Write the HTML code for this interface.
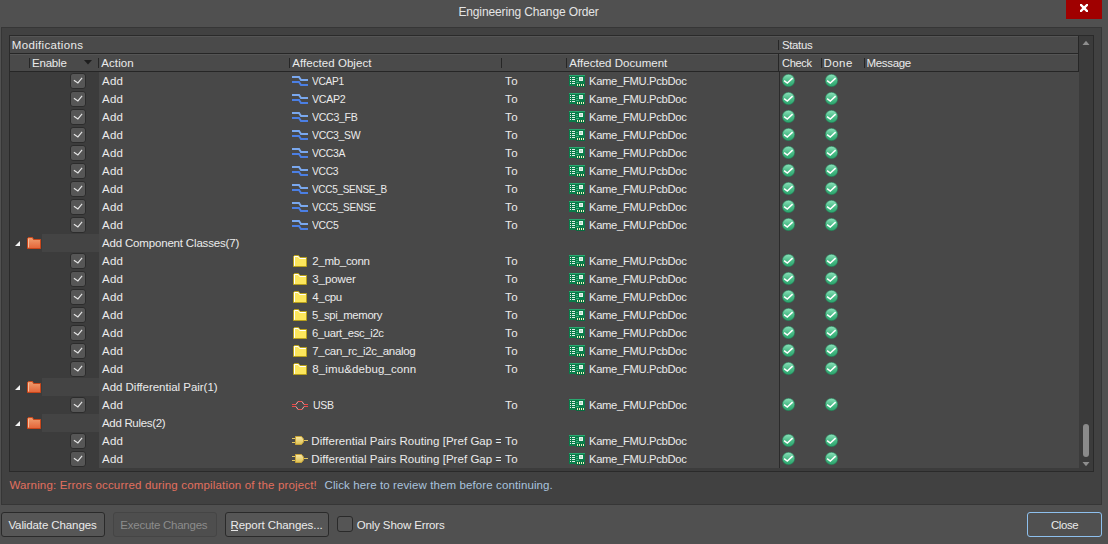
<!DOCTYPE html><html><head><meta charset='utf-8'><style>
*{margin:0;padding:0;box-sizing:border-box}
html,body{width:1108px;height:544px;overflow:hidden;background:#505050;font-family:"Liberation Sans",sans-serif;font-size:11.5px}
.a{position:absolute}
.t{position:absolute;line-height:20px;white-space:pre}
.ic{position:absolute;display:block}
.cb{position:absolute;width:16px;height:16px;border:1px solid #2c2c2c;border-radius:3px;background:#565656}
.grp{position:absolute;left:42px;width:57px;height:18px;background:#444444}
.sep{position:absolute;width:1px;height:10px;background:#262626}
.btn{position:absolute;top:512px;height:25px;border:1px solid #2a2a2a;border-radius:3px;background:#565656}
</style></head><body><div class=a style='left:1066px;top:0;width:36px;height:19px;background:#a00000'></div>
<svg class=ic style='left:1080px;top:4px' width=8 height=8 viewBox='0 0 8 8'><path d='M0.9 0.9L7.1 7.1M7.1 0.9L0.9 7.1' stroke='#fff' stroke-width='2.3' stroke-linecap='square'/><rect x='2.5' y='2.5' width='3' height='3' fill='#fff'/></svg>
<div class=a style='left:1px;top:27px;width:1101px;height:478px;background:#414141;border:1px solid #363636'></div>
<div class=a style='left:9px;top:35px;width:1085px;height:437px;background:#3c3c3c;border:1px solid #2a2a2a'></div>
<div class=a style='left:10px;top:36px;width:1069px;height:18px;background:#4a4a4a;border-top:1px solid #555;border-bottom:1px solid #262626'></div>
<div class=a style='left:10px;top:54px;width:1069px;height:18px;background:#4a4a4a;border-top:1px solid #555;border-bottom:1px solid #262626'></div>
<div class=a style='left:1078px;top:36px;width:1px;height:36px;background:#262626'></div>
<div class=sep style='left:778px;top:40px'></div>
<div class=sep style='left:29px;top:58px'></div>
<div class=sep style='left:98px;top:58px'></div>
<div class=sep style='left:289px;top:58px'></div>
<div class=sep style='left:501px;top:58px'></div>
<div class=sep style='left:566px;top:58px'></div>
<div class=sep style='left:821px;top:58px'></div>
<div class=sep style='left:864px;top:58px'></div>
<svg class=ic style='left:84px;top:60px' width=9 height=5 viewBox='0 0 9 5'><path d='M0 0H8L4 4.5Z' fill='#1e1e1e'/></svg>
<div class=a style='left:99px;top:72px;width:980px;height:396px;background:#484848'></div>
<div class=grp style='top:234px'></div>
<div class=grp style='top:378px'></div>
<div class=grp style='top:414px'></div>
<div class=a style='left:778px;top:54px;width:1px;height:18px;background:#262626'></div>
<div class=a style='left:779px;top:72px;width:1px;height:396px;background:#2a2a2a'></div>
<div class=a style='left:1079px;top:36px;width:14px;height:434px;background:#3b3b3b'></div>
<svg class=ic style='left:1082px;top:40px' width=8 height=5 viewBox='0 0 8 5'><path d='M0.5 5H7.5L4 0.8Z' fill='#8e8e8e'/></svg>
<svg class=ic style='left:1082px;top:462px' width=8 height=5 viewBox='0 0 8 5'><path d='M0.5 0H7.5L4 4.2Z' fill='#8e8e8e'/></svg>
<div class=a style='left:1083px;top:424px;width:6px;height:33px;border-radius:3px;background:#8a8a8a'></div>
<div class=cb style='left:70px;top:73px'><svg width=14 height=14 viewBox='0 0 14 14' style='position:absolute;left:0;top:0'><path d='M2.9 6.2L6.9 8.9L11.1 3.9' stroke='#e8e8e8' stroke-width='1.1' fill='none'/></svg></div>
<svg class=ic style='left:292px;top:76px' width=17 height=12 viewBox='0 0 17 12'><path d='M0 1H7L9 4H16' stroke='#7aa8ee' stroke-width='2' fill='none'/><path d='M0 6H7L9 9H16' stroke='#4b7fe4' stroke-width='2' fill='none'/></svg>
<svg class=ic style='left:569px;top:75px' width=16 height=12 viewBox='0 0 16 12'><rect x='0' y='0' width='16' height='11' fill='#0a7c4a'/><rect x='7' y='9' width='9' height='3' fill='#086c40'/><rect x='7' y='3' width='2' height='1' fill='#34b07a'/><rect x='7' y='5' width='2' height='1' fill='#34b07a'/><rect x='7' y='7' width='3' height='1' fill='#34b07a'/><rect x='0' y='0' width='16' height='1' fill='#2aa870'/><rect x='1' y='2' width='1' height='1' fill='#e8f4ee'/><rect x='3' y='2' width='3' height='1' fill='#e0f0e8'/><rect x='1' y='4' width='1' height='1' fill='#e8f4ee'/><rect x='3' y='4' width='3' height='1' fill='#e0f0e8'/><rect x='1' y='6' width='1' height='1' fill='#e8f4ee'/><rect x='3' y='6' width='3' height='1' fill='#e0f0e8'/><rect x='1' y='8' width='1' height='1' fill='#e8f4ee'/><rect x='3' y='8' width='3' height='1' fill='#e0f0e8'/><rect x='10' y='2' width='4' height='4' fill='#e8f4ee'/><rect x='11' y='3' width='2' height='2' fill='#b8dcc8'/><rect x='8' y='9' width='1' height='2' fill='#f4f0c0'/><rect x='10' y='9' width='1' height='2' fill='#f4f0c0'/><rect x='12' y='9' width='1' height='2' fill='#f4f0c0'/><rect x='14' y='9' width='1' height='2' fill='#f4f0c0'/></svg>
<svg class=ic style='left:782px;top:74px' width=13 height=13 viewBox='0 0 13 13'><defs><linearGradient id='gs' x1='0' y1='0' x2='0' y2='1'><stop offset='0' stop-color='#8ce2bc'/><stop offset='0.5' stop-color='#4cbc88'/><stop offset='1' stop-color='#2aa46c'/></linearGradient></defs><circle cx='6.5' cy='6.5' r='6.2' fill='url(#gs)' stroke='#207a52' stroke-width='0.5'/><path d='M2.1 6.6L5.3 9.1L10.6 4.1' stroke='#fff' stroke-width='1.5' fill='none'/></svg>
<svg class=ic style='left:825px;top:74px' width=13 height=13 viewBox='0 0 13 13'><defs><linearGradient id='gs' x1='0' y1='0' x2='0' y2='1'><stop offset='0' stop-color='#8ce2bc'/><stop offset='0.5' stop-color='#4cbc88'/><stop offset='1' stop-color='#2aa46c'/></linearGradient></defs><circle cx='6.5' cy='6.5' r='6.2' fill='url(#gs)' stroke='#207a52' stroke-width='0.5'/><path d='M2.1 6.6L5.3 9.1L10.6 4.1' stroke='#fff' stroke-width='1.5' fill='none'/></svg>
<div class=cb style='left:70px;top:91px'><svg width=14 height=14 viewBox='0 0 14 14' style='position:absolute;left:0;top:0'><path d='M2.9 6.2L6.9 8.9L11.1 3.9' stroke='#e8e8e8' stroke-width='1.1' fill='none'/></svg></div>
<svg class=ic style='left:292px;top:94px' width=17 height=12 viewBox='0 0 17 12'><path d='M0 1H7L9 4H16' stroke='#7aa8ee' stroke-width='2' fill='none'/><path d='M0 6H7L9 9H16' stroke='#4b7fe4' stroke-width='2' fill='none'/></svg>
<svg class=ic style='left:569px;top:93px' width=16 height=12 viewBox='0 0 16 12'><rect x='0' y='0' width='16' height='11' fill='#0a7c4a'/><rect x='7' y='9' width='9' height='3' fill='#086c40'/><rect x='7' y='3' width='2' height='1' fill='#34b07a'/><rect x='7' y='5' width='2' height='1' fill='#34b07a'/><rect x='7' y='7' width='3' height='1' fill='#34b07a'/><rect x='0' y='0' width='16' height='1' fill='#2aa870'/><rect x='1' y='2' width='1' height='1' fill='#e8f4ee'/><rect x='3' y='2' width='3' height='1' fill='#e0f0e8'/><rect x='1' y='4' width='1' height='1' fill='#e8f4ee'/><rect x='3' y='4' width='3' height='1' fill='#e0f0e8'/><rect x='1' y='6' width='1' height='1' fill='#e8f4ee'/><rect x='3' y='6' width='3' height='1' fill='#e0f0e8'/><rect x='1' y='8' width='1' height='1' fill='#e8f4ee'/><rect x='3' y='8' width='3' height='1' fill='#e0f0e8'/><rect x='10' y='2' width='4' height='4' fill='#e8f4ee'/><rect x='11' y='3' width='2' height='2' fill='#b8dcc8'/><rect x='8' y='9' width='1' height='2' fill='#f4f0c0'/><rect x='10' y='9' width='1' height='2' fill='#f4f0c0'/><rect x='12' y='9' width='1' height='2' fill='#f4f0c0'/><rect x='14' y='9' width='1' height='2' fill='#f4f0c0'/></svg>
<svg class=ic style='left:782px;top:92px' width=13 height=13 viewBox='0 0 13 13'><defs><linearGradient id='gs' x1='0' y1='0' x2='0' y2='1'><stop offset='0' stop-color='#8ce2bc'/><stop offset='0.5' stop-color='#4cbc88'/><stop offset='1' stop-color='#2aa46c'/></linearGradient></defs><circle cx='6.5' cy='6.5' r='6.2' fill='url(#gs)' stroke='#207a52' stroke-width='0.5'/><path d='M2.1 6.6L5.3 9.1L10.6 4.1' stroke='#fff' stroke-width='1.5' fill='none'/></svg>
<svg class=ic style='left:825px;top:92px' width=13 height=13 viewBox='0 0 13 13'><defs><linearGradient id='gs' x1='0' y1='0' x2='0' y2='1'><stop offset='0' stop-color='#8ce2bc'/><stop offset='0.5' stop-color='#4cbc88'/><stop offset='1' stop-color='#2aa46c'/></linearGradient></defs><circle cx='6.5' cy='6.5' r='6.2' fill='url(#gs)' stroke='#207a52' stroke-width='0.5'/><path d='M2.1 6.6L5.3 9.1L10.6 4.1' stroke='#fff' stroke-width='1.5' fill='none'/></svg>
<div class=cb style='left:70px;top:109px'><svg width=14 height=14 viewBox='0 0 14 14' style='position:absolute;left:0;top:0'><path d='M2.9 6.2L6.9 8.9L11.1 3.9' stroke='#e8e8e8' stroke-width='1.1' fill='none'/></svg></div>
<svg class=ic style='left:292px;top:112px' width=17 height=12 viewBox='0 0 17 12'><path d='M0 1H7L9 4H16' stroke='#7aa8ee' stroke-width='2' fill='none'/><path d='M0 6H7L9 9H16' stroke='#4b7fe4' stroke-width='2' fill='none'/></svg>
<svg class=ic style='left:569px;top:111px' width=16 height=12 viewBox='0 0 16 12'><rect x='0' y='0' width='16' height='11' fill='#0a7c4a'/><rect x='7' y='9' width='9' height='3' fill='#086c40'/><rect x='7' y='3' width='2' height='1' fill='#34b07a'/><rect x='7' y='5' width='2' height='1' fill='#34b07a'/><rect x='7' y='7' width='3' height='1' fill='#34b07a'/><rect x='0' y='0' width='16' height='1' fill='#2aa870'/><rect x='1' y='2' width='1' height='1' fill='#e8f4ee'/><rect x='3' y='2' width='3' height='1' fill='#e0f0e8'/><rect x='1' y='4' width='1' height='1' fill='#e8f4ee'/><rect x='3' y='4' width='3' height='1' fill='#e0f0e8'/><rect x='1' y='6' width='1' height='1' fill='#e8f4ee'/><rect x='3' y='6' width='3' height='1' fill='#e0f0e8'/><rect x='1' y='8' width='1' height='1' fill='#e8f4ee'/><rect x='3' y='8' width='3' height='1' fill='#e0f0e8'/><rect x='10' y='2' width='4' height='4' fill='#e8f4ee'/><rect x='11' y='3' width='2' height='2' fill='#b8dcc8'/><rect x='8' y='9' width='1' height='2' fill='#f4f0c0'/><rect x='10' y='9' width='1' height='2' fill='#f4f0c0'/><rect x='12' y='9' width='1' height='2' fill='#f4f0c0'/><rect x='14' y='9' width='1' height='2' fill='#f4f0c0'/></svg>
<svg class=ic style='left:782px;top:110px' width=13 height=13 viewBox='0 0 13 13'><defs><linearGradient id='gs' x1='0' y1='0' x2='0' y2='1'><stop offset='0' stop-color='#8ce2bc'/><stop offset='0.5' stop-color='#4cbc88'/><stop offset='1' stop-color='#2aa46c'/></linearGradient></defs><circle cx='6.5' cy='6.5' r='6.2' fill='url(#gs)' stroke='#207a52' stroke-width='0.5'/><path d='M2.1 6.6L5.3 9.1L10.6 4.1' stroke='#fff' stroke-width='1.5' fill='none'/></svg>
<svg class=ic style='left:825px;top:110px' width=13 height=13 viewBox='0 0 13 13'><defs><linearGradient id='gs' x1='0' y1='0' x2='0' y2='1'><stop offset='0' stop-color='#8ce2bc'/><stop offset='0.5' stop-color='#4cbc88'/><stop offset='1' stop-color='#2aa46c'/></linearGradient></defs><circle cx='6.5' cy='6.5' r='6.2' fill='url(#gs)' stroke='#207a52' stroke-width='0.5'/><path d='M2.1 6.6L5.3 9.1L10.6 4.1' stroke='#fff' stroke-width='1.5' fill='none'/></svg>
<div class=cb style='left:70px;top:127px'><svg width=14 height=14 viewBox='0 0 14 14' style='position:absolute;left:0;top:0'><path d='M2.9 6.2L6.9 8.9L11.1 3.9' stroke='#e8e8e8' stroke-width='1.1' fill='none'/></svg></div>
<svg class=ic style='left:292px;top:130px' width=17 height=12 viewBox='0 0 17 12'><path d='M0 1H7L9 4H16' stroke='#7aa8ee' stroke-width='2' fill='none'/><path d='M0 6H7L9 9H16' stroke='#4b7fe4' stroke-width='2' fill='none'/></svg>
<svg class=ic style='left:569px;top:129px' width=16 height=12 viewBox='0 0 16 12'><rect x='0' y='0' width='16' height='11' fill='#0a7c4a'/><rect x='7' y='9' width='9' height='3' fill='#086c40'/><rect x='7' y='3' width='2' height='1' fill='#34b07a'/><rect x='7' y='5' width='2' height='1' fill='#34b07a'/><rect x='7' y='7' width='3' height='1' fill='#34b07a'/><rect x='0' y='0' width='16' height='1' fill='#2aa870'/><rect x='1' y='2' width='1' height='1' fill='#e8f4ee'/><rect x='3' y='2' width='3' height='1' fill='#e0f0e8'/><rect x='1' y='4' width='1' height='1' fill='#e8f4ee'/><rect x='3' y='4' width='3' height='1' fill='#e0f0e8'/><rect x='1' y='6' width='1' height='1' fill='#e8f4ee'/><rect x='3' y='6' width='3' height='1' fill='#e0f0e8'/><rect x='1' y='8' width='1' height='1' fill='#e8f4ee'/><rect x='3' y='8' width='3' height='1' fill='#e0f0e8'/><rect x='10' y='2' width='4' height='4' fill='#e8f4ee'/><rect x='11' y='3' width='2' height='2' fill='#b8dcc8'/><rect x='8' y='9' width='1' height='2' fill='#f4f0c0'/><rect x='10' y='9' width='1' height='2' fill='#f4f0c0'/><rect x='12' y='9' width='1' height='2' fill='#f4f0c0'/><rect x='14' y='9' width='1' height='2' fill='#f4f0c0'/></svg>
<svg class=ic style='left:782px;top:128px' width=13 height=13 viewBox='0 0 13 13'><defs><linearGradient id='gs' x1='0' y1='0' x2='0' y2='1'><stop offset='0' stop-color='#8ce2bc'/><stop offset='0.5' stop-color='#4cbc88'/><stop offset='1' stop-color='#2aa46c'/></linearGradient></defs><circle cx='6.5' cy='6.5' r='6.2' fill='url(#gs)' stroke='#207a52' stroke-width='0.5'/><path d='M2.1 6.6L5.3 9.1L10.6 4.1' stroke='#fff' stroke-width='1.5' fill='none'/></svg>
<svg class=ic style='left:825px;top:128px' width=13 height=13 viewBox='0 0 13 13'><defs><linearGradient id='gs' x1='0' y1='0' x2='0' y2='1'><stop offset='0' stop-color='#8ce2bc'/><stop offset='0.5' stop-color='#4cbc88'/><stop offset='1' stop-color='#2aa46c'/></linearGradient></defs><circle cx='6.5' cy='6.5' r='6.2' fill='url(#gs)' stroke='#207a52' stroke-width='0.5'/><path d='M2.1 6.6L5.3 9.1L10.6 4.1' stroke='#fff' stroke-width='1.5' fill='none'/></svg>
<div class=cb style='left:70px;top:145px'><svg width=14 height=14 viewBox='0 0 14 14' style='position:absolute;left:0;top:0'><path d='M2.9 6.2L6.9 8.9L11.1 3.9' stroke='#e8e8e8' stroke-width='1.1' fill='none'/></svg></div>
<svg class=ic style='left:292px;top:148px' width=17 height=12 viewBox='0 0 17 12'><path d='M0 1H7L9 4H16' stroke='#7aa8ee' stroke-width='2' fill='none'/><path d='M0 6H7L9 9H16' stroke='#4b7fe4' stroke-width='2' fill='none'/></svg>
<svg class=ic style='left:569px;top:147px' width=16 height=12 viewBox='0 0 16 12'><rect x='0' y='0' width='16' height='11' fill='#0a7c4a'/><rect x='7' y='9' width='9' height='3' fill='#086c40'/><rect x='7' y='3' width='2' height='1' fill='#34b07a'/><rect x='7' y='5' width='2' height='1' fill='#34b07a'/><rect x='7' y='7' width='3' height='1' fill='#34b07a'/><rect x='0' y='0' width='16' height='1' fill='#2aa870'/><rect x='1' y='2' width='1' height='1' fill='#e8f4ee'/><rect x='3' y='2' width='3' height='1' fill='#e0f0e8'/><rect x='1' y='4' width='1' height='1' fill='#e8f4ee'/><rect x='3' y='4' width='3' height='1' fill='#e0f0e8'/><rect x='1' y='6' width='1' height='1' fill='#e8f4ee'/><rect x='3' y='6' width='3' height='1' fill='#e0f0e8'/><rect x='1' y='8' width='1' height='1' fill='#e8f4ee'/><rect x='3' y='8' width='3' height='1' fill='#e0f0e8'/><rect x='10' y='2' width='4' height='4' fill='#e8f4ee'/><rect x='11' y='3' width='2' height='2' fill='#b8dcc8'/><rect x='8' y='9' width='1' height='2' fill='#f4f0c0'/><rect x='10' y='9' width='1' height='2' fill='#f4f0c0'/><rect x='12' y='9' width='1' height='2' fill='#f4f0c0'/><rect x='14' y='9' width='1' height='2' fill='#f4f0c0'/></svg>
<svg class=ic style='left:782px;top:146px' width=13 height=13 viewBox='0 0 13 13'><defs><linearGradient id='gs' x1='0' y1='0' x2='0' y2='1'><stop offset='0' stop-color='#8ce2bc'/><stop offset='0.5' stop-color='#4cbc88'/><stop offset='1' stop-color='#2aa46c'/></linearGradient></defs><circle cx='6.5' cy='6.5' r='6.2' fill='url(#gs)' stroke='#207a52' stroke-width='0.5'/><path d='M2.1 6.6L5.3 9.1L10.6 4.1' stroke='#fff' stroke-width='1.5' fill='none'/></svg>
<svg class=ic style='left:825px;top:146px' width=13 height=13 viewBox='0 0 13 13'><defs><linearGradient id='gs' x1='0' y1='0' x2='0' y2='1'><stop offset='0' stop-color='#8ce2bc'/><stop offset='0.5' stop-color='#4cbc88'/><stop offset='1' stop-color='#2aa46c'/></linearGradient></defs><circle cx='6.5' cy='6.5' r='6.2' fill='url(#gs)' stroke='#207a52' stroke-width='0.5'/><path d='M2.1 6.6L5.3 9.1L10.6 4.1' stroke='#fff' stroke-width='1.5' fill='none'/></svg>
<div class=cb style='left:70px;top:163px'><svg width=14 height=14 viewBox='0 0 14 14' style='position:absolute;left:0;top:0'><path d='M2.9 6.2L6.9 8.9L11.1 3.9' stroke='#e8e8e8' stroke-width='1.1' fill='none'/></svg></div>
<svg class=ic style='left:292px;top:166px' width=17 height=12 viewBox='0 0 17 12'><path d='M0 1H7L9 4H16' stroke='#7aa8ee' stroke-width='2' fill='none'/><path d='M0 6H7L9 9H16' stroke='#4b7fe4' stroke-width='2' fill='none'/></svg>
<svg class=ic style='left:569px;top:165px' width=16 height=12 viewBox='0 0 16 12'><rect x='0' y='0' width='16' height='11' fill='#0a7c4a'/><rect x='7' y='9' width='9' height='3' fill='#086c40'/><rect x='7' y='3' width='2' height='1' fill='#34b07a'/><rect x='7' y='5' width='2' height='1' fill='#34b07a'/><rect x='7' y='7' width='3' height='1' fill='#34b07a'/><rect x='0' y='0' width='16' height='1' fill='#2aa870'/><rect x='1' y='2' width='1' height='1' fill='#e8f4ee'/><rect x='3' y='2' width='3' height='1' fill='#e0f0e8'/><rect x='1' y='4' width='1' height='1' fill='#e8f4ee'/><rect x='3' y='4' width='3' height='1' fill='#e0f0e8'/><rect x='1' y='6' width='1' height='1' fill='#e8f4ee'/><rect x='3' y='6' width='3' height='1' fill='#e0f0e8'/><rect x='1' y='8' width='1' height='1' fill='#e8f4ee'/><rect x='3' y='8' width='3' height='1' fill='#e0f0e8'/><rect x='10' y='2' width='4' height='4' fill='#e8f4ee'/><rect x='11' y='3' width='2' height='2' fill='#b8dcc8'/><rect x='8' y='9' width='1' height='2' fill='#f4f0c0'/><rect x='10' y='9' width='1' height='2' fill='#f4f0c0'/><rect x='12' y='9' width='1' height='2' fill='#f4f0c0'/><rect x='14' y='9' width='1' height='2' fill='#f4f0c0'/></svg>
<svg class=ic style='left:782px;top:164px' width=13 height=13 viewBox='0 0 13 13'><defs><linearGradient id='gs' x1='0' y1='0' x2='0' y2='1'><stop offset='0' stop-color='#8ce2bc'/><stop offset='0.5' stop-color='#4cbc88'/><stop offset='1' stop-color='#2aa46c'/></linearGradient></defs><circle cx='6.5' cy='6.5' r='6.2' fill='url(#gs)' stroke='#207a52' stroke-width='0.5'/><path d='M2.1 6.6L5.3 9.1L10.6 4.1' stroke='#fff' stroke-width='1.5' fill='none'/></svg>
<svg class=ic style='left:825px;top:164px' width=13 height=13 viewBox='0 0 13 13'><defs><linearGradient id='gs' x1='0' y1='0' x2='0' y2='1'><stop offset='0' stop-color='#8ce2bc'/><stop offset='0.5' stop-color='#4cbc88'/><stop offset='1' stop-color='#2aa46c'/></linearGradient></defs><circle cx='6.5' cy='6.5' r='6.2' fill='url(#gs)' stroke='#207a52' stroke-width='0.5'/><path d='M2.1 6.6L5.3 9.1L10.6 4.1' stroke='#fff' stroke-width='1.5' fill='none'/></svg>
<div class=cb style='left:70px;top:181px'><svg width=14 height=14 viewBox='0 0 14 14' style='position:absolute;left:0;top:0'><path d='M2.9 6.2L6.9 8.9L11.1 3.9' stroke='#e8e8e8' stroke-width='1.1' fill='none'/></svg></div>
<svg class=ic style='left:292px;top:184px' width=17 height=12 viewBox='0 0 17 12'><path d='M0 1H7L9 4H16' stroke='#7aa8ee' stroke-width='2' fill='none'/><path d='M0 6H7L9 9H16' stroke='#4b7fe4' stroke-width='2' fill='none'/></svg>
<svg class=ic style='left:569px;top:183px' width=16 height=12 viewBox='0 0 16 12'><rect x='0' y='0' width='16' height='11' fill='#0a7c4a'/><rect x='7' y='9' width='9' height='3' fill='#086c40'/><rect x='7' y='3' width='2' height='1' fill='#34b07a'/><rect x='7' y='5' width='2' height='1' fill='#34b07a'/><rect x='7' y='7' width='3' height='1' fill='#34b07a'/><rect x='0' y='0' width='16' height='1' fill='#2aa870'/><rect x='1' y='2' width='1' height='1' fill='#e8f4ee'/><rect x='3' y='2' width='3' height='1' fill='#e0f0e8'/><rect x='1' y='4' width='1' height='1' fill='#e8f4ee'/><rect x='3' y='4' width='3' height='1' fill='#e0f0e8'/><rect x='1' y='6' width='1' height='1' fill='#e8f4ee'/><rect x='3' y='6' width='3' height='1' fill='#e0f0e8'/><rect x='1' y='8' width='1' height='1' fill='#e8f4ee'/><rect x='3' y='8' width='3' height='1' fill='#e0f0e8'/><rect x='10' y='2' width='4' height='4' fill='#e8f4ee'/><rect x='11' y='3' width='2' height='2' fill='#b8dcc8'/><rect x='8' y='9' width='1' height='2' fill='#f4f0c0'/><rect x='10' y='9' width='1' height='2' fill='#f4f0c0'/><rect x='12' y='9' width='1' height='2' fill='#f4f0c0'/><rect x='14' y='9' width='1' height='2' fill='#f4f0c0'/></svg>
<svg class=ic style='left:782px;top:182px' width=13 height=13 viewBox='0 0 13 13'><defs><linearGradient id='gs' x1='0' y1='0' x2='0' y2='1'><stop offset='0' stop-color='#8ce2bc'/><stop offset='0.5' stop-color='#4cbc88'/><stop offset='1' stop-color='#2aa46c'/></linearGradient></defs><circle cx='6.5' cy='6.5' r='6.2' fill='url(#gs)' stroke='#207a52' stroke-width='0.5'/><path d='M2.1 6.6L5.3 9.1L10.6 4.1' stroke='#fff' stroke-width='1.5' fill='none'/></svg>
<svg class=ic style='left:825px;top:182px' width=13 height=13 viewBox='0 0 13 13'><defs><linearGradient id='gs' x1='0' y1='0' x2='0' y2='1'><stop offset='0' stop-color='#8ce2bc'/><stop offset='0.5' stop-color='#4cbc88'/><stop offset='1' stop-color='#2aa46c'/></linearGradient></defs><circle cx='6.5' cy='6.5' r='6.2' fill='url(#gs)' stroke='#207a52' stroke-width='0.5'/><path d='M2.1 6.6L5.3 9.1L10.6 4.1' stroke='#fff' stroke-width='1.5' fill='none'/></svg>
<div class=cb style='left:70px;top:199px'><svg width=14 height=14 viewBox='0 0 14 14' style='position:absolute;left:0;top:0'><path d='M2.9 6.2L6.9 8.9L11.1 3.9' stroke='#e8e8e8' stroke-width='1.1' fill='none'/></svg></div>
<svg class=ic style='left:292px;top:202px' width=17 height=12 viewBox='0 0 17 12'><path d='M0 1H7L9 4H16' stroke='#7aa8ee' stroke-width='2' fill='none'/><path d='M0 6H7L9 9H16' stroke='#4b7fe4' stroke-width='2' fill='none'/></svg>
<svg class=ic style='left:569px;top:201px' width=16 height=12 viewBox='0 0 16 12'><rect x='0' y='0' width='16' height='11' fill='#0a7c4a'/><rect x='7' y='9' width='9' height='3' fill='#086c40'/><rect x='7' y='3' width='2' height='1' fill='#34b07a'/><rect x='7' y='5' width='2' height='1' fill='#34b07a'/><rect x='7' y='7' width='3' height='1' fill='#34b07a'/><rect x='0' y='0' width='16' height='1' fill='#2aa870'/><rect x='1' y='2' width='1' height='1' fill='#e8f4ee'/><rect x='3' y='2' width='3' height='1' fill='#e0f0e8'/><rect x='1' y='4' width='1' height='1' fill='#e8f4ee'/><rect x='3' y='4' width='3' height='1' fill='#e0f0e8'/><rect x='1' y='6' width='1' height='1' fill='#e8f4ee'/><rect x='3' y='6' width='3' height='1' fill='#e0f0e8'/><rect x='1' y='8' width='1' height='1' fill='#e8f4ee'/><rect x='3' y='8' width='3' height='1' fill='#e0f0e8'/><rect x='10' y='2' width='4' height='4' fill='#e8f4ee'/><rect x='11' y='3' width='2' height='2' fill='#b8dcc8'/><rect x='8' y='9' width='1' height='2' fill='#f4f0c0'/><rect x='10' y='9' width='1' height='2' fill='#f4f0c0'/><rect x='12' y='9' width='1' height='2' fill='#f4f0c0'/><rect x='14' y='9' width='1' height='2' fill='#f4f0c0'/></svg>
<svg class=ic style='left:782px;top:200px' width=13 height=13 viewBox='0 0 13 13'><defs><linearGradient id='gs' x1='0' y1='0' x2='0' y2='1'><stop offset='0' stop-color='#8ce2bc'/><stop offset='0.5' stop-color='#4cbc88'/><stop offset='1' stop-color='#2aa46c'/></linearGradient></defs><circle cx='6.5' cy='6.5' r='6.2' fill='url(#gs)' stroke='#207a52' stroke-width='0.5'/><path d='M2.1 6.6L5.3 9.1L10.6 4.1' stroke='#fff' stroke-width='1.5' fill='none'/></svg>
<svg class=ic style='left:825px;top:200px' width=13 height=13 viewBox='0 0 13 13'><defs><linearGradient id='gs' x1='0' y1='0' x2='0' y2='1'><stop offset='0' stop-color='#8ce2bc'/><stop offset='0.5' stop-color='#4cbc88'/><stop offset='1' stop-color='#2aa46c'/></linearGradient></defs><circle cx='6.5' cy='6.5' r='6.2' fill='url(#gs)' stroke='#207a52' stroke-width='0.5'/><path d='M2.1 6.6L5.3 9.1L10.6 4.1' stroke='#fff' stroke-width='1.5' fill='none'/></svg>
<div class=cb style='left:70px;top:217px'><svg width=14 height=14 viewBox='0 0 14 14' style='position:absolute;left:0;top:0'><path d='M2.9 6.2L6.9 8.9L11.1 3.9' stroke='#e8e8e8' stroke-width='1.1' fill='none'/></svg></div>
<svg class=ic style='left:292px;top:220px' width=17 height=12 viewBox='0 0 17 12'><path d='M0 1H7L9 4H16' stroke='#7aa8ee' stroke-width='2' fill='none'/><path d='M0 6H7L9 9H16' stroke='#4b7fe4' stroke-width='2' fill='none'/></svg>
<svg class=ic style='left:569px;top:219px' width=16 height=12 viewBox='0 0 16 12'><rect x='0' y='0' width='16' height='11' fill='#0a7c4a'/><rect x='7' y='9' width='9' height='3' fill='#086c40'/><rect x='7' y='3' width='2' height='1' fill='#34b07a'/><rect x='7' y='5' width='2' height='1' fill='#34b07a'/><rect x='7' y='7' width='3' height='1' fill='#34b07a'/><rect x='0' y='0' width='16' height='1' fill='#2aa870'/><rect x='1' y='2' width='1' height='1' fill='#e8f4ee'/><rect x='3' y='2' width='3' height='1' fill='#e0f0e8'/><rect x='1' y='4' width='1' height='1' fill='#e8f4ee'/><rect x='3' y='4' width='3' height='1' fill='#e0f0e8'/><rect x='1' y='6' width='1' height='1' fill='#e8f4ee'/><rect x='3' y='6' width='3' height='1' fill='#e0f0e8'/><rect x='1' y='8' width='1' height='1' fill='#e8f4ee'/><rect x='3' y='8' width='3' height='1' fill='#e0f0e8'/><rect x='10' y='2' width='4' height='4' fill='#e8f4ee'/><rect x='11' y='3' width='2' height='2' fill='#b8dcc8'/><rect x='8' y='9' width='1' height='2' fill='#f4f0c0'/><rect x='10' y='9' width='1' height='2' fill='#f4f0c0'/><rect x='12' y='9' width='1' height='2' fill='#f4f0c0'/><rect x='14' y='9' width='1' height='2' fill='#f4f0c0'/></svg>
<svg class=ic style='left:782px;top:218px' width=13 height=13 viewBox='0 0 13 13'><defs><linearGradient id='gs' x1='0' y1='0' x2='0' y2='1'><stop offset='0' stop-color='#8ce2bc'/><stop offset='0.5' stop-color='#4cbc88'/><stop offset='1' stop-color='#2aa46c'/></linearGradient></defs><circle cx='6.5' cy='6.5' r='6.2' fill='url(#gs)' stroke='#207a52' stroke-width='0.5'/><path d='M2.1 6.6L5.3 9.1L10.6 4.1' stroke='#fff' stroke-width='1.5' fill='none'/></svg>
<svg class=ic style='left:825px;top:218px' width=13 height=13 viewBox='0 0 13 13'><defs><linearGradient id='gs' x1='0' y1='0' x2='0' y2='1'><stop offset='0' stop-color='#8ce2bc'/><stop offset='0.5' stop-color='#4cbc88'/><stop offset='1' stop-color='#2aa46c'/></linearGradient></defs><circle cx='6.5' cy='6.5' r='6.2' fill='url(#gs)' stroke='#207a52' stroke-width='0.5'/><path d='M2.1 6.6L5.3 9.1L10.6 4.1' stroke='#fff' stroke-width='1.5' fill='none'/></svg>
<svg class=ic style='left:15px;top:241px' width=6 height=6 viewBox='0 0 6 6'><path d='M0 5L5 0V5Z' fill='#f4f4f4'/></svg>
<svg class=ic style='left:27px;top:237px' width=14 height=12 viewBox='0 0 14 12'><defs><linearGradient id='go' x1='0' y1='0' x2='0' y2='1'><stop offset='0' stop-color='#f0a070'/><stop offset='1' stop-color='#e46438'/></linearGradient></defs><path d='M0.5 11.5V1.5L1.5 0.5H5.5L6.5 2.5H13.5V11.5Z' fill='url(#go)' stroke='#c8461a' stroke-width='1'/><path d='M1.5 10.5V2' stroke='#f6c0a0' stroke-width='1'/></svg>
<div class=cb style='left:70px;top:253px'><svg width=14 height=14 viewBox='0 0 14 14' style='position:absolute;left:0;top:0'><path d='M2.9 6.2L6.9 8.9L11.1 3.9' stroke='#e8e8e8' stroke-width='1.1' fill='none'/></svg></div>
<svg class=ic style='left:293px;top:255px' width=14 height=12 viewBox='0 0 14 12'><path d='M0.5 11.5V1.5L1.5 0.5H5.5L7 2.5H13.5V11.5Z' fill='#fce65c' stroke='#b8a01c' stroke-width='1'/><path d='M1.5 10.8V1.5H5.2L6.7 3.5H12.8' stroke='#ffffff' stroke-width='1' fill='none'/></svg>
<svg class=ic style='left:569px;top:255px' width=16 height=12 viewBox='0 0 16 12'><rect x='0' y='0' width='16' height='11' fill='#0a7c4a'/><rect x='7' y='9' width='9' height='3' fill='#086c40'/><rect x='7' y='3' width='2' height='1' fill='#34b07a'/><rect x='7' y='5' width='2' height='1' fill='#34b07a'/><rect x='7' y='7' width='3' height='1' fill='#34b07a'/><rect x='0' y='0' width='16' height='1' fill='#2aa870'/><rect x='1' y='2' width='1' height='1' fill='#e8f4ee'/><rect x='3' y='2' width='3' height='1' fill='#e0f0e8'/><rect x='1' y='4' width='1' height='1' fill='#e8f4ee'/><rect x='3' y='4' width='3' height='1' fill='#e0f0e8'/><rect x='1' y='6' width='1' height='1' fill='#e8f4ee'/><rect x='3' y='6' width='3' height='1' fill='#e0f0e8'/><rect x='1' y='8' width='1' height='1' fill='#e8f4ee'/><rect x='3' y='8' width='3' height='1' fill='#e0f0e8'/><rect x='10' y='2' width='4' height='4' fill='#e8f4ee'/><rect x='11' y='3' width='2' height='2' fill='#b8dcc8'/><rect x='8' y='9' width='1' height='2' fill='#f4f0c0'/><rect x='10' y='9' width='1' height='2' fill='#f4f0c0'/><rect x='12' y='9' width='1' height='2' fill='#f4f0c0'/><rect x='14' y='9' width='1' height='2' fill='#f4f0c0'/></svg>
<svg class=ic style='left:782px;top:254px' width=13 height=13 viewBox='0 0 13 13'><defs><linearGradient id='gs' x1='0' y1='0' x2='0' y2='1'><stop offset='0' stop-color='#8ce2bc'/><stop offset='0.5' stop-color='#4cbc88'/><stop offset='1' stop-color='#2aa46c'/></linearGradient></defs><circle cx='6.5' cy='6.5' r='6.2' fill='url(#gs)' stroke='#207a52' stroke-width='0.5'/><path d='M2.1 6.6L5.3 9.1L10.6 4.1' stroke='#fff' stroke-width='1.5' fill='none'/></svg>
<svg class=ic style='left:825px;top:254px' width=13 height=13 viewBox='0 0 13 13'><defs><linearGradient id='gs' x1='0' y1='0' x2='0' y2='1'><stop offset='0' stop-color='#8ce2bc'/><stop offset='0.5' stop-color='#4cbc88'/><stop offset='1' stop-color='#2aa46c'/></linearGradient></defs><circle cx='6.5' cy='6.5' r='6.2' fill='url(#gs)' stroke='#207a52' stroke-width='0.5'/><path d='M2.1 6.6L5.3 9.1L10.6 4.1' stroke='#fff' stroke-width='1.5' fill='none'/></svg>
<div class=cb style='left:70px;top:271px'><svg width=14 height=14 viewBox='0 0 14 14' style='position:absolute;left:0;top:0'><path d='M2.9 6.2L6.9 8.9L11.1 3.9' stroke='#e8e8e8' stroke-width='1.1' fill='none'/></svg></div>
<svg class=ic style='left:293px;top:273px' width=14 height=12 viewBox='0 0 14 12'><path d='M0.5 11.5V1.5L1.5 0.5H5.5L7 2.5H13.5V11.5Z' fill='#fce65c' stroke='#b8a01c' stroke-width='1'/><path d='M1.5 10.8V1.5H5.2L6.7 3.5H12.8' stroke='#ffffff' stroke-width='1' fill='none'/></svg>
<svg class=ic style='left:569px;top:273px' width=16 height=12 viewBox='0 0 16 12'><rect x='0' y='0' width='16' height='11' fill='#0a7c4a'/><rect x='7' y='9' width='9' height='3' fill='#086c40'/><rect x='7' y='3' width='2' height='1' fill='#34b07a'/><rect x='7' y='5' width='2' height='1' fill='#34b07a'/><rect x='7' y='7' width='3' height='1' fill='#34b07a'/><rect x='0' y='0' width='16' height='1' fill='#2aa870'/><rect x='1' y='2' width='1' height='1' fill='#e8f4ee'/><rect x='3' y='2' width='3' height='1' fill='#e0f0e8'/><rect x='1' y='4' width='1' height='1' fill='#e8f4ee'/><rect x='3' y='4' width='3' height='1' fill='#e0f0e8'/><rect x='1' y='6' width='1' height='1' fill='#e8f4ee'/><rect x='3' y='6' width='3' height='1' fill='#e0f0e8'/><rect x='1' y='8' width='1' height='1' fill='#e8f4ee'/><rect x='3' y='8' width='3' height='1' fill='#e0f0e8'/><rect x='10' y='2' width='4' height='4' fill='#e8f4ee'/><rect x='11' y='3' width='2' height='2' fill='#b8dcc8'/><rect x='8' y='9' width='1' height='2' fill='#f4f0c0'/><rect x='10' y='9' width='1' height='2' fill='#f4f0c0'/><rect x='12' y='9' width='1' height='2' fill='#f4f0c0'/><rect x='14' y='9' width='1' height='2' fill='#f4f0c0'/></svg>
<svg class=ic style='left:782px;top:272px' width=13 height=13 viewBox='0 0 13 13'><defs><linearGradient id='gs' x1='0' y1='0' x2='0' y2='1'><stop offset='0' stop-color='#8ce2bc'/><stop offset='0.5' stop-color='#4cbc88'/><stop offset='1' stop-color='#2aa46c'/></linearGradient></defs><circle cx='6.5' cy='6.5' r='6.2' fill='url(#gs)' stroke='#207a52' stroke-width='0.5'/><path d='M2.1 6.6L5.3 9.1L10.6 4.1' stroke='#fff' stroke-width='1.5' fill='none'/></svg>
<svg class=ic style='left:825px;top:272px' width=13 height=13 viewBox='0 0 13 13'><defs><linearGradient id='gs' x1='0' y1='0' x2='0' y2='1'><stop offset='0' stop-color='#8ce2bc'/><stop offset='0.5' stop-color='#4cbc88'/><stop offset='1' stop-color='#2aa46c'/></linearGradient></defs><circle cx='6.5' cy='6.5' r='6.2' fill='url(#gs)' stroke='#207a52' stroke-width='0.5'/><path d='M2.1 6.6L5.3 9.1L10.6 4.1' stroke='#fff' stroke-width='1.5' fill='none'/></svg>
<div class=cb style='left:70px;top:289px'><svg width=14 height=14 viewBox='0 0 14 14' style='position:absolute;left:0;top:0'><path d='M2.9 6.2L6.9 8.9L11.1 3.9' stroke='#e8e8e8' stroke-width='1.1' fill='none'/></svg></div>
<svg class=ic style='left:293px;top:291px' width=14 height=12 viewBox='0 0 14 12'><path d='M0.5 11.5V1.5L1.5 0.5H5.5L7 2.5H13.5V11.5Z' fill='#fce65c' stroke='#b8a01c' stroke-width='1'/><path d='M1.5 10.8V1.5H5.2L6.7 3.5H12.8' stroke='#ffffff' stroke-width='1' fill='none'/></svg>
<svg class=ic style='left:569px;top:291px' width=16 height=12 viewBox='0 0 16 12'><rect x='0' y='0' width='16' height='11' fill='#0a7c4a'/><rect x='7' y='9' width='9' height='3' fill='#086c40'/><rect x='7' y='3' width='2' height='1' fill='#34b07a'/><rect x='7' y='5' width='2' height='1' fill='#34b07a'/><rect x='7' y='7' width='3' height='1' fill='#34b07a'/><rect x='0' y='0' width='16' height='1' fill='#2aa870'/><rect x='1' y='2' width='1' height='1' fill='#e8f4ee'/><rect x='3' y='2' width='3' height='1' fill='#e0f0e8'/><rect x='1' y='4' width='1' height='1' fill='#e8f4ee'/><rect x='3' y='4' width='3' height='1' fill='#e0f0e8'/><rect x='1' y='6' width='1' height='1' fill='#e8f4ee'/><rect x='3' y='6' width='3' height='1' fill='#e0f0e8'/><rect x='1' y='8' width='1' height='1' fill='#e8f4ee'/><rect x='3' y='8' width='3' height='1' fill='#e0f0e8'/><rect x='10' y='2' width='4' height='4' fill='#e8f4ee'/><rect x='11' y='3' width='2' height='2' fill='#b8dcc8'/><rect x='8' y='9' width='1' height='2' fill='#f4f0c0'/><rect x='10' y='9' width='1' height='2' fill='#f4f0c0'/><rect x='12' y='9' width='1' height='2' fill='#f4f0c0'/><rect x='14' y='9' width='1' height='2' fill='#f4f0c0'/></svg>
<svg class=ic style='left:782px;top:290px' width=13 height=13 viewBox='0 0 13 13'><defs><linearGradient id='gs' x1='0' y1='0' x2='0' y2='1'><stop offset='0' stop-color='#8ce2bc'/><stop offset='0.5' stop-color='#4cbc88'/><stop offset='1' stop-color='#2aa46c'/></linearGradient></defs><circle cx='6.5' cy='6.5' r='6.2' fill='url(#gs)' stroke='#207a52' stroke-width='0.5'/><path d='M2.1 6.6L5.3 9.1L10.6 4.1' stroke='#fff' stroke-width='1.5' fill='none'/></svg>
<svg class=ic style='left:825px;top:290px' width=13 height=13 viewBox='0 0 13 13'><defs><linearGradient id='gs' x1='0' y1='0' x2='0' y2='1'><stop offset='0' stop-color='#8ce2bc'/><stop offset='0.5' stop-color='#4cbc88'/><stop offset='1' stop-color='#2aa46c'/></linearGradient></defs><circle cx='6.5' cy='6.5' r='6.2' fill='url(#gs)' stroke='#207a52' stroke-width='0.5'/><path d='M2.1 6.6L5.3 9.1L10.6 4.1' stroke='#fff' stroke-width='1.5' fill='none'/></svg>
<div class=cb style='left:70px;top:307px'><svg width=14 height=14 viewBox='0 0 14 14' style='position:absolute;left:0;top:0'><path d='M2.9 6.2L6.9 8.9L11.1 3.9' stroke='#e8e8e8' stroke-width='1.1' fill='none'/></svg></div>
<svg class=ic style='left:293px;top:309px' width=14 height=12 viewBox='0 0 14 12'><path d='M0.5 11.5V1.5L1.5 0.5H5.5L7 2.5H13.5V11.5Z' fill='#fce65c' stroke='#b8a01c' stroke-width='1'/><path d='M1.5 10.8V1.5H5.2L6.7 3.5H12.8' stroke='#ffffff' stroke-width='1' fill='none'/></svg>
<svg class=ic style='left:569px;top:309px' width=16 height=12 viewBox='0 0 16 12'><rect x='0' y='0' width='16' height='11' fill='#0a7c4a'/><rect x='7' y='9' width='9' height='3' fill='#086c40'/><rect x='7' y='3' width='2' height='1' fill='#34b07a'/><rect x='7' y='5' width='2' height='1' fill='#34b07a'/><rect x='7' y='7' width='3' height='1' fill='#34b07a'/><rect x='0' y='0' width='16' height='1' fill='#2aa870'/><rect x='1' y='2' width='1' height='1' fill='#e8f4ee'/><rect x='3' y='2' width='3' height='1' fill='#e0f0e8'/><rect x='1' y='4' width='1' height='1' fill='#e8f4ee'/><rect x='3' y='4' width='3' height='1' fill='#e0f0e8'/><rect x='1' y='6' width='1' height='1' fill='#e8f4ee'/><rect x='3' y='6' width='3' height='1' fill='#e0f0e8'/><rect x='1' y='8' width='1' height='1' fill='#e8f4ee'/><rect x='3' y='8' width='3' height='1' fill='#e0f0e8'/><rect x='10' y='2' width='4' height='4' fill='#e8f4ee'/><rect x='11' y='3' width='2' height='2' fill='#b8dcc8'/><rect x='8' y='9' width='1' height='2' fill='#f4f0c0'/><rect x='10' y='9' width='1' height='2' fill='#f4f0c0'/><rect x='12' y='9' width='1' height='2' fill='#f4f0c0'/><rect x='14' y='9' width='1' height='2' fill='#f4f0c0'/></svg>
<svg class=ic style='left:782px;top:308px' width=13 height=13 viewBox='0 0 13 13'><defs><linearGradient id='gs' x1='0' y1='0' x2='0' y2='1'><stop offset='0' stop-color='#8ce2bc'/><stop offset='0.5' stop-color='#4cbc88'/><stop offset='1' stop-color='#2aa46c'/></linearGradient></defs><circle cx='6.5' cy='6.5' r='6.2' fill='url(#gs)' stroke='#207a52' stroke-width='0.5'/><path d='M2.1 6.6L5.3 9.1L10.6 4.1' stroke='#fff' stroke-width='1.5' fill='none'/></svg>
<svg class=ic style='left:825px;top:308px' width=13 height=13 viewBox='0 0 13 13'><defs><linearGradient id='gs' x1='0' y1='0' x2='0' y2='1'><stop offset='0' stop-color='#8ce2bc'/><stop offset='0.5' stop-color='#4cbc88'/><stop offset='1' stop-color='#2aa46c'/></linearGradient></defs><circle cx='6.5' cy='6.5' r='6.2' fill='url(#gs)' stroke='#207a52' stroke-width='0.5'/><path d='M2.1 6.6L5.3 9.1L10.6 4.1' stroke='#fff' stroke-width='1.5' fill='none'/></svg>
<div class=cb style='left:70px;top:325px'><svg width=14 height=14 viewBox='0 0 14 14' style='position:absolute;left:0;top:0'><path d='M2.9 6.2L6.9 8.9L11.1 3.9' stroke='#e8e8e8' stroke-width='1.1' fill='none'/></svg></div>
<svg class=ic style='left:293px;top:327px' width=14 height=12 viewBox='0 0 14 12'><path d='M0.5 11.5V1.5L1.5 0.5H5.5L7 2.5H13.5V11.5Z' fill='#fce65c' stroke='#b8a01c' stroke-width='1'/><path d='M1.5 10.8V1.5H5.2L6.7 3.5H12.8' stroke='#ffffff' stroke-width='1' fill='none'/></svg>
<svg class=ic style='left:569px;top:327px' width=16 height=12 viewBox='0 0 16 12'><rect x='0' y='0' width='16' height='11' fill='#0a7c4a'/><rect x='7' y='9' width='9' height='3' fill='#086c40'/><rect x='7' y='3' width='2' height='1' fill='#34b07a'/><rect x='7' y='5' width='2' height='1' fill='#34b07a'/><rect x='7' y='7' width='3' height='1' fill='#34b07a'/><rect x='0' y='0' width='16' height='1' fill='#2aa870'/><rect x='1' y='2' width='1' height='1' fill='#e8f4ee'/><rect x='3' y='2' width='3' height='1' fill='#e0f0e8'/><rect x='1' y='4' width='1' height='1' fill='#e8f4ee'/><rect x='3' y='4' width='3' height='1' fill='#e0f0e8'/><rect x='1' y='6' width='1' height='1' fill='#e8f4ee'/><rect x='3' y='6' width='3' height='1' fill='#e0f0e8'/><rect x='1' y='8' width='1' height='1' fill='#e8f4ee'/><rect x='3' y='8' width='3' height='1' fill='#e0f0e8'/><rect x='10' y='2' width='4' height='4' fill='#e8f4ee'/><rect x='11' y='3' width='2' height='2' fill='#b8dcc8'/><rect x='8' y='9' width='1' height='2' fill='#f4f0c0'/><rect x='10' y='9' width='1' height='2' fill='#f4f0c0'/><rect x='12' y='9' width='1' height='2' fill='#f4f0c0'/><rect x='14' y='9' width='1' height='2' fill='#f4f0c0'/></svg>
<svg class=ic style='left:782px;top:326px' width=13 height=13 viewBox='0 0 13 13'><defs><linearGradient id='gs' x1='0' y1='0' x2='0' y2='1'><stop offset='0' stop-color='#8ce2bc'/><stop offset='0.5' stop-color='#4cbc88'/><stop offset='1' stop-color='#2aa46c'/></linearGradient></defs><circle cx='6.5' cy='6.5' r='6.2' fill='url(#gs)' stroke='#207a52' stroke-width='0.5'/><path d='M2.1 6.6L5.3 9.1L10.6 4.1' stroke='#fff' stroke-width='1.5' fill='none'/></svg>
<svg class=ic style='left:825px;top:326px' width=13 height=13 viewBox='0 0 13 13'><defs><linearGradient id='gs' x1='0' y1='0' x2='0' y2='1'><stop offset='0' stop-color='#8ce2bc'/><stop offset='0.5' stop-color='#4cbc88'/><stop offset='1' stop-color='#2aa46c'/></linearGradient></defs><circle cx='6.5' cy='6.5' r='6.2' fill='url(#gs)' stroke='#207a52' stroke-width='0.5'/><path d='M2.1 6.6L5.3 9.1L10.6 4.1' stroke='#fff' stroke-width='1.5' fill='none'/></svg>
<div class=cb style='left:70px;top:343px'><svg width=14 height=14 viewBox='0 0 14 14' style='position:absolute;left:0;top:0'><path d='M2.9 6.2L6.9 8.9L11.1 3.9' stroke='#e8e8e8' stroke-width='1.1' fill='none'/></svg></div>
<svg class=ic style='left:293px;top:345px' width=14 height=12 viewBox='0 0 14 12'><path d='M0.5 11.5V1.5L1.5 0.5H5.5L7 2.5H13.5V11.5Z' fill='#fce65c' stroke='#b8a01c' stroke-width='1'/><path d='M1.5 10.8V1.5H5.2L6.7 3.5H12.8' stroke='#ffffff' stroke-width='1' fill='none'/></svg>
<svg class=ic style='left:569px;top:345px' width=16 height=12 viewBox='0 0 16 12'><rect x='0' y='0' width='16' height='11' fill='#0a7c4a'/><rect x='7' y='9' width='9' height='3' fill='#086c40'/><rect x='7' y='3' width='2' height='1' fill='#34b07a'/><rect x='7' y='5' width='2' height='1' fill='#34b07a'/><rect x='7' y='7' width='3' height='1' fill='#34b07a'/><rect x='0' y='0' width='16' height='1' fill='#2aa870'/><rect x='1' y='2' width='1' height='1' fill='#e8f4ee'/><rect x='3' y='2' width='3' height='1' fill='#e0f0e8'/><rect x='1' y='4' width='1' height='1' fill='#e8f4ee'/><rect x='3' y='4' width='3' height='1' fill='#e0f0e8'/><rect x='1' y='6' width='1' height='1' fill='#e8f4ee'/><rect x='3' y='6' width='3' height='1' fill='#e0f0e8'/><rect x='1' y='8' width='1' height='1' fill='#e8f4ee'/><rect x='3' y='8' width='3' height='1' fill='#e0f0e8'/><rect x='10' y='2' width='4' height='4' fill='#e8f4ee'/><rect x='11' y='3' width='2' height='2' fill='#b8dcc8'/><rect x='8' y='9' width='1' height='2' fill='#f4f0c0'/><rect x='10' y='9' width='1' height='2' fill='#f4f0c0'/><rect x='12' y='9' width='1' height='2' fill='#f4f0c0'/><rect x='14' y='9' width='1' height='2' fill='#f4f0c0'/></svg>
<svg class=ic style='left:782px;top:344px' width=13 height=13 viewBox='0 0 13 13'><defs><linearGradient id='gs' x1='0' y1='0' x2='0' y2='1'><stop offset='0' stop-color='#8ce2bc'/><stop offset='0.5' stop-color='#4cbc88'/><stop offset='1' stop-color='#2aa46c'/></linearGradient></defs><circle cx='6.5' cy='6.5' r='6.2' fill='url(#gs)' stroke='#207a52' stroke-width='0.5'/><path d='M2.1 6.6L5.3 9.1L10.6 4.1' stroke='#fff' stroke-width='1.5' fill='none'/></svg>
<svg class=ic style='left:825px;top:344px' width=13 height=13 viewBox='0 0 13 13'><defs><linearGradient id='gs' x1='0' y1='0' x2='0' y2='1'><stop offset='0' stop-color='#8ce2bc'/><stop offset='0.5' stop-color='#4cbc88'/><stop offset='1' stop-color='#2aa46c'/></linearGradient></defs><circle cx='6.5' cy='6.5' r='6.2' fill='url(#gs)' stroke='#207a52' stroke-width='0.5'/><path d='M2.1 6.6L5.3 9.1L10.6 4.1' stroke='#fff' stroke-width='1.5' fill='none'/></svg>
<div class=cb style='left:70px;top:361px'><svg width=14 height=14 viewBox='0 0 14 14' style='position:absolute;left:0;top:0'><path d='M2.9 6.2L6.9 8.9L11.1 3.9' stroke='#e8e8e8' stroke-width='1.1' fill='none'/></svg></div>
<svg class=ic style='left:293px;top:363px' width=14 height=12 viewBox='0 0 14 12'><path d='M0.5 11.5V1.5L1.5 0.5H5.5L7 2.5H13.5V11.5Z' fill='#fce65c' stroke='#b8a01c' stroke-width='1'/><path d='M1.5 10.8V1.5H5.2L6.7 3.5H12.8' stroke='#ffffff' stroke-width='1' fill='none'/></svg>
<svg class=ic style='left:569px;top:363px' width=16 height=12 viewBox='0 0 16 12'><rect x='0' y='0' width='16' height='11' fill='#0a7c4a'/><rect x='7' y='9' width='9' height='3' fill='#086c40'/><rect x='7' y='3' width='2' height='1' fill='#34b07a'/><rect x='7' y='5' width='2' height='1' fill='#34b07a'/><rect x='7' y='7' width='3' height='1' fill='#34b07a'/><rect x='0' y='0' width='16' height='1' fill='#2aa870'/><rect x='1' y='2' width='1' height='1' fill='#e8f4ee'/><rect x='3' y='2' width='3' height='1' fill='#e0f0e8'/><rect x='1' y='4' width='1' height='1' fill='#e8f4ee'/><rect x='3' y='4' width='3' height='1' fill='#e0f0e8'/><rect x='1' y='6' width='1' height='1' fill='#e8f4ee'/><rect x='3' y='6' width='3' height='1' fill='#e0f0e8'/><rect x='1' y='8' width='1' height='1' fill='#e8f4ee'/><rect x='3' y='8' width='3' height='1' fill='#e0f0e8'/><rect x='10' y='2' width='4' height='4' fill='#e8f4ee'/><rect x='11' y='3' width='2' height='2' fill='#b8dcc8'/><rect x='8' y='9' width='1' height='2' fill='#f4f0c0'/><rect x='10' y='9' width='1' height='2' fill='#f4f0c0'/><rect x='12' y='9' width='1' height='2' fill='#f4f0c0'/><rect x='14' y='9' width='1' height='2' fill='#f4f0c0'/></svg>
<svg class=ic style='left:782px;top:362px' width=13 height=13 viewBox='0 0 13 13'><defs><linearGradient id='gs' x1='0' y1='0' x2='0' y2='1'><stop offset='0' stop-color='#8ce2bc'/><stop offset='0.5' stop-color='#4cbc88'/><stop offset='1' stop-color='#2aa46c'/></linearGradient></defs><circle cx='6.5' cy='6.5' r='6.2' fill='url(#gs)' stroke='#207a52' stroke-width='0.5'/><path d='M2.1 6.6L5.3 9.1L10.6 4.1' stroke='#fff' stroke-width='1.5' fill='none'/></svg>
<svg class=ic style='left:825px;top:362px' width=13 height=13 viewBox='0 0 13 13'><defs><linearGradient id='gs' x1='0' y1='0' x2='0' y2='1'><stop offset='0' stop-color='#8ce2bc'/><stop offset='0.5' stop-color='#4cbc88'/><stop offset='1' stop-color='#2aa46c'/></linearGradient></defs><circle cx='6.5' cy='6.5' r='6.2' fill='url(#gs)' stroke='#207a52' stroke-width='0.5'/><path d='M2.1 6.6L5.3 9.1L10.6 4.1' stroke='#fff' stroke-width='1.5' fill='none'/></svg>
<svg class=ic style='left:15px;top:385px' width=6 height=6 viewBox='0 0 6 6'><path d='M0 5L5 0V5Z' fill='#f4f4f4'/></svg>
<svg class=ic style='left:27px;top:381px' width=14 height=12 viewBox='0 0 14 12'><defs><linearGradient id='go' x1='0' y1='0' x2='0' y2='1'><stop offset='0' stop-color='#f0a070'/><stop offset='1' stop-color='#e46438'/></linearGradient></defs><path d='M0.5 11.5V1.5L1.5 0.5H5.5L6.5 2.5H13.5V11.5Z' fill='url(#go)' stroke='#c8461a' stroke-width='1'/><path d='M1.5 10.5V2' stroke='#f6c0a0' stroke-width='1'/></svg>
<div class=cb style='left:70px;top:397px'><svg width=14 height=14 viewBox='0 0 14 14' style='position:absolute;left:0;top:0'><path d='M2.9 6.2L6.9 8.9L11.1 3.9' stroke='#e8e8e8' stroke-width='1.1' fill='none'/></svg></div>
<svg class=ic style='left:292px;top:401px' width=17 height=10 viewBox='0 0 17 10'><path d='M0 3.5H4M12 3.5H16M0 5.5H4M12 5.5H16M6 0.5H10M6 8.5H10' stroke='#f04848' stroke-width='1'/><path d='M4 3.5L6 0.5M10 0.5L12 3.5M4 5.5L6 8.5M10 8.5L12 5.5' stroke='#f0a8a8' stroke-width='1' fill='none'/></svg>
<svg class=ic style='left:569px;top:399px' width=16 height=12 viewBox='0 0 16 12'><rect x='0' y='0' width='16' height='11' fill='#0a7c4a'/><rect x='7' y='9' width='9' height='3' fill='#086c40'/><rect x='7' y='3' width='2' height='1' fill='#34b07a'/><rect x='7' y='5' width='2' height='1' fill='#34b07a'/><rect x='7' y='7' width='3' height='1' fill='#34b07a'/><rect x='0' y='0' width='16' height='1' fill='#2aa870'/><rect x='1' y='2' width='1' height='1' fill='#e8f4ee'/><rect x='3' y='2' width='3' height='1' fill='#e0f0e8'/><rect x='1' y='4' width='1' height='1' fill='#e8f4ee'/><rect x='3' y='4' width='3' height='1' fill='#e0f0e8'/><rect x='1' y='6' width='1' height='1' fill='#e8f4ee'/><rect x='3' y='6' width='3' height='1' fill='#e0f0e8'/><rect x='1' y='8' width='1' height='1' fill='#e8f4ee'/><rect x='3' y='8' width='3' height='1' fill='#e0f0e8'/><rect x='10' y='2' width='4' height='4' fill='#e8f4ee'/><rect x='11' y='3' width='2' height='2' fill='#b8dcc8'/><rect x='8' y='9' width='1' height='2' fill='#f4f0c0'/><rect x='10' y='9' width='1' height='2' fill='#f4f0c0'/><rect x='12' y='9' width='1' height='2' fill='#f4f0c0'/><rect x='14' y='9' width='1' height='2' fill='#f4f0c0'/></svg>
<svg class=ic style='left:782px;top:398px' width=13 height=13 viewBox='0 0 13 13'><defs><linearGradient id='gs' x1='0' y1='0' x2='0' y2='1'><stop offset='0' stop-color='#8ce2bc'/><stop offset='0.5' stop-color='#4cbc88'/><stop offset='1' stop-color='#2aa46c'/></linearGradient></defs><circle cx='6.5' cy='6.5' r='6.2' fill='url(#gs)' stroke='#207a52' stroke-width='0.5'/><path d='M2.1 6.6L5.3 9.1L10.6 4.1' stroke='#fff' stroke-width='1.5' fill='none'/></svg>
<svg class=ic style='left:825px;top:398px' width=13 height=13 viewBox='0 0 13 13'><defs><linearGradient id='gs' x1='0' y1='0' x2='0' y2='1'><stop offset='0' stop-color='#8ce2bc'/><stop offset='0.5' stop-color='#4cbc88'/><stop offset='1' stop-color='#2aa46c'/></linearGradient></defs><circle cx='6.5' cy='6.5' r='6.2' fill='url(#gs)' stroke='#207a52' stroke-width='0.5'/><path d='M2.1 6.6L5.3 9.1L10.6 4.1' stroke='#fff' stroke-width='1.5' fill='none'/></svg>
<svg class=ic style='left:15px;top:421px' width=6 height=6 viewBox='0 0 6 6'><path d='M0 5L5 0V5Z' fill='#f4f4f4'/></svg>
<svg class=ic style='left:27px;top:417px' width=14 height=12 viewBox='0 0 14 12'><defs><linearGradient id='go' x1='0' y1='0' x2='0' y2='1'><stop offset='0' stop-color='#f0a070'/><stop offset='1' stop-color='#e46438'/></linearGradient></defs><path d='M0.5 11.5V1.5L1.5 0.5H5.5L6.5 2.5H13.5V11.5Z' fill='url(#go)' stroke='#c8461a' stroke-width='1'/><path d='M1.5 10.5V2' stroke='#f6c0a0' stroke-width='1'/></svg>
<div class=cb style='left:70px;top:433px'><svg width=14 height=14 viewBox='0 0 14 14' style='position:absolute;left:0;top:0'><path d='M2.9 6.2L6.9 8.9L11.1 3.9' stroke='#e8e8e8' stroke-width='1.1' fill='none'/></svg></div>
<svg class=ic style='left:292px;top:436px' width=17 height=10 viewBox='0 0 17 10'><defs><linearGradient id='gr' x1='0' y1='0' x2='0' y2='1'><stop offset='0' stop-color='#fbeaa8'/><stop offset='1' stop-color='#dcc050'/></linearGradient></defs><path d='M0 2.5H3M0 6.5H3M12 4.5H16' stroke='#e0c460' stroke-width='1'/><path d='M3.5 0.5H9.5L11.5 3V6L9.5 8.5H3.5Z' fill='url(#gr)' stroke='#c8a438' stroke-width='1'/></svg>
<svg class=ic style='left:569px;top:435px' width=16 height=12 viewBox='0 0 16 12'><rect x='0' y='0' width='16' height='11' fill='#0a7c4a'/><rect x='7' y='9' width='9' height='3' fill='#086c40'/><rect x='7' y='3' width='2' height='1' fill='#34b07a'/><rect x='7' y='5' width='2' height='1' fill='#34b07a'/><rect x='7' y='7' width='3' height='1' fill='#34b07a'/><rect x='0' y='0' width='16' height='1' fill='#2aa870'/><rect x='1' y='2' width='1' height='1' fill='#e8f4ee'/><rect x='3' y='2' width='3' height='1' fill='#e0f0e8'/><rect x='1' y='4' width='1' height='1' fill='#e8f4ee'/><rect x='3' y='4' width='3' height='1' fill='#e0f0e8'/><rect x='1' y='6' width='1' height='1' fill='#e8f4ee'/><rect x='3' y='6' width='3' height='1' fill='#e0f0e8'/><rect x='1' y='8' width='1' height='1' fill='#e8f4ee'/><rect x='3' y='8' width='3' height='1' fill='#e0f0e8'/><rect x='10' y='2' width='4' height='4' fill='#e8f4ee'/><rect x='11' y='3' width='2' height='2' fill='#b8dcc8'/><rect x='8' y='9' width='1' height='2' fill='#f4f0c0'/><rect x='10' y='9' width='1' height='2' fill='#f4f0c0'/><rect x='12' y='9' width='1' height='2' fill='#f4f0c0'/><rect x='14' y='9' width='1' height='2' fill='#f4f0c0'/></svg>
<svg class=ic style='left:782px;top:434px' width=13 height=13 viewBox='0 0 13 13'><defs><linearGradient id='gs' x1='0' y1='0' x2='0' y2='1'><stop offset='0' stop-color='#8ce2bc'/><stop offset='0.5' stop-color='#4cbc88'/><stop offset='1' stop-color='#2aa46c'/></linearGradient></defs><circle cx='6.5' cy='6.5' r='6.2' fill='url(#gs)' stroke='#207a52' stroke-width='0.5'/><path d='M2.1 6.6L5.3 9.1L10.6 4.1' stroke='#fff' stroke-width='1.5' fill='none'/></svg>
<svg class=ic style='left:825px;top:434px' width=13 height=13 viewBox='0 0 13 13'><defs><linearGradient id='gs' x1='0' y1='0' x2='0' y2='1'><stop offset='0' stop-color='#8ce2bc'/><stop offset='0.5' stop-color='#4cbc88'/><stop offset='1' stop-color='#2aa46c'/></linearGradient></defs><circle cx='6.5' cy='6.5' r='6.2' fill='url(#gs)' stroke='#207a52' stroke-width='0.5'/><path d='M2.1 6.6L5.3 9.1L10.6 4.1' stroke='#fff' stroke-width='1.5' fill='none'/></svg>
<div class=cb style='left:70px;top:451px'><svg width=14 height=14 viewBox='0 0 14 14' style='position:absolute;left:0;top:0'><path d='M2.9 6.2L6.9 8.9L11.1 3.9' stroke='#e8e8e8' stroke-width='1.1' fill='none'/></svg></div>
<svg class=ic style='left:292px;top:454px' width=17 height=10 viewBox='0 0 17 10'><defs><linearGradient id='gr' x1='0' y1='0' x2='0' y2='1'><stop offset='0' stop-color='#fbeaa8'/><stop offset='1' stop-color='#dcc050'/></linearGradient></defs><path d='M0 2.5H3M0 6.5H3M12 4.5H16' stroke='#e0c460' stroke-width='1'/><path d='M3.5 0.5H9.5L11.5 3V6L9.5 8.5H3.5Z' fill='url(#gr)' stroke='#c8a438' stroke-width='1'/></svg>
<svg class=ic style='left:569px;top:453px' width=16 height=12 viewBox='0 0 16 12'><rect x='0' y='0' width='16' height='11' fill='#0a7c4a'/><rect x='7' y='9' width='9' height='3' fill='#086c40'/><rect x='7' y='3' width='2' height='1' fill='#34b07a'/><rect x='7' y='5' width='2' height='1' fill='#34b07a'/><rect x='7' y='7' width='3' height='1' fill='#34b07a'/><rect x='0' y='0' width='16' height='1' fill='#2aa870'/><rect x='1' y='2' width='1' height='1' fill='#e8f4ee'/><rect x='3' y='2' width='3' height='1' fill='#e0f0e8'/><rect x='1' y='4' width='1' height='1' fill='#e8f4ee'/><rect x='3' y='4' width='3' height='1' fill='#e0f0e8'/><rect x='1' y='6' width='1' height='1' fill='#e8f4ee'/><rect x='3' y='6' width='3' height='1' fill='#e0f0e8'/><rect x='1' y='8' width='1' height='1' fill='#e8f4ee'/><rect x='3' y='8' width='3' height='1' fill='#e0f0e8'/><rect x='10' y='2' width='4' height='4' fill='#e8f4ee'/><rect x='11' y='3' width='2' height='2' fill='#b8dcc8'/><rect x='8' y='9' width='1' height='2' fill='#f4f0c0'/><rect x='10' y='9' width='1' height='2' fill='#f4f0c0'/><rect x='12' y='9' width='1' height='2' fill='#f4f0c0'/><rect x='14' y='9' width='1' height='2' fill='#f4f0c0'/></svg>
<svg class=ic style='left:782px;top:452px' width=13 height=13 viewBox='0 0 13 13'><defs><linearGradient id='gs' x1='0' y1='0' x2='0' y2='1'><stop offset='0' stop-color='#8ce2bc'/><stop offset='0.5' stop-color='#4cbc88'/><stop offset='1' stop-color='#2aa46c'/></linearGradient></defs><circle cx='6.5' cy='6.5' r='6.2' fill='url(#gs)' stroke='#207a52' stroke-width='0.5'/><path d='M2.1 6.6L5.3 9.1L10.6 4.1' stroke='#fff' stroke-width='1.5' fill='none'/></svg>
<svg class=ic style='left:825px;top:452px' width=13 height=13 viewBox='0 0 13 13'><defs><linearGradient id='gs' x1='0' y1='0' x2='0' y2='1'><stop offset='0' stop-color='#8ce2bc'/><stop offset='0.5' stop-color='#4cbc88'/><stop offset='1' stop-color='#2aa46c'/></linearGradient></defs><circle cx='6.5' cy='6.5' r='6.2' fill='url(#gs)' stroke='#207a52' stroke-width='0.5'/><path d='M2.1 6.6L5.3 9.1L10.6 4.1' stroke='#fff' stroke-width='1.5' fill='none'/></svg>
<div class=btn style='left:1px;width:104px'></div>
<div class=btn style='left:113px;width:104px;background:#4e4e4e;border-color:#454545'></div>
<div class=btn style='left:225px;width:104px'></div>
<div class=a style='left:337px;top:516px;width:16px;height:16px;border:1px solid #2a2a2a;border-radius:3px;background:#555'></div>
<div class=btn style='left:1027px;width:75px;background:#505050;border-color:#8ec0ee'></div>
<div class=a style='left:231px;top:530px;width:7px;height:1px;background:#e6e6e6'></div>
<div class=t style="left:458.40px;top:2.00px;color:#e4e4e4;letter-spacing:-0.130px;font-size:12px">Engineering Change Order</div>
<div class=t style="left:11.80px;top:35.00px;color:#ebebeb;letter-spacing:0.333px">Modifications</div>
<div class=t style="left:781.50px;top:35.00px;color:#ebebeb;letter-spacing:-0.350px;transform:scaleX(0.9920);transform-origin:0 0">Status</div>
<div class=t style="left:32.00px;top:53.00px;color:#ebebeb;letter-spacing:-0.200px">Enable</div>
<div class=t style="left:101.25px;top:53.00px;color:#ebebeb;letter-spacing:0.100px">Action</div>
<div class=t style="left:292.25px;top:53.00px;color:#ebebeb;letter-spacing:0.054px">Affected Object</div>
<div class=t style="left:569.30px;top:53.00px;color:#ebebeb;letter-spacing:0.025px">Affected Document</div>
<div class=t style="left:781.50px;top:53.00px;color:#ebebeb;letter-spacing:-0.350px;transform:scaleX(0.9620);transform-origin:0 0">Check</div>
<div class=t style="left:823.40px;top:53.00px;color:#ebebeb;letter-spacing:0.500px">Done</div>
<div class=t style="left:866.40px;top:53.00px;color:#ebebeb;letter-spacing:-0.300px">Message</div>
<div class=t style="left:102.00px;top:71.00px;color:#ebebeb;letter-spacing:0.250px">Add</div>
<div class=t style="left:312.30px;top:71.00px;color:#ebebeb;letter-spacing:-0.350px;transform:scaleX(0.8848);transform-origin:0 0;width:213.26px;overflow:hidden">VCAP1</div>
<div class=t style="left:505.00px;top:71.00px;color:#ebebeb;letter-spacing:0.500px">To</div>
<div class=t style="left:588.52px;top:71.00px;color:#ebebeb;letter-spacing:-0.350px;transform:scaleX(0.9788);transform-origin:0 0">Kame_FMU.PcbDoc</div>
<div class=t style="left:102.00px;top:89.00px;color:#ebebeb;letter-spacing:0.250px">Add</div>
<div class=t style="left:312.30px;top:89.00px;color:#ebebeb;letter-spacing:-0.350px;transform:scaleX(0.9270);transform-origin:0 0;width:203.57px;overflow:hidden">VCAP2</div>
<div class=t style="left:505.00px;top:89.00px;color:#ebebeb;letter-spacing:0.500px">To</div>
<div class=t style="left:588.52px;top:89.00px;color:#ebebeb;letter-spacing:-0.350px;transform:scaleX(0.9788);transform-origin:0 0">Kame_FMU.PcbDoc</div>
<div class=t style="left:102.00px;top:107.00px;color:#ebebeb;letter-spacing:0.250px">Add</div>
<div class=t style="left:312.30px;top:107.00px;color:#ebebeb;letter-spacing:-0.350px;transform:scaleX(0.9202);transform-origin:0 0;width:205.05px;overflow:hidden">VCC3_FB</div>
<div class=t style="left:505.00px;top:107.00px;color:#ebebeb;letter-spacing:0.500px">To</div>
<div class=t style="left:588.52px;top:107.00px;color:#ebebeb;letter-spacing:-0.350px;transform:scaleX(0.9788);transform-origin:0 0">Kame_FMU.PcbDoc</div>
<div class=t style="left:102.00px;top:125.00px;color:#ebebeb;letter-spacing:0.250px">Add</div>
<div class=t style="left:312.30px;top:125.00px;color:#ebebeb;letter-spacing:-0.350px;transform:scaleX(0.9091);transform-origin:0 0;width:207.57px;overflow:hidden">VCC3_SW</div>
<div class=t style="left:505.00px;top:125.00px;color:#ebebeb;letter-spacing:0.500px">To</div>
<div class=t style="left:588.52px;top:125.00px;color:#ebebeb;letter-spacing:-0.350px;transform:scaleX(0.9788);transform-origin:0 0">Kame_FMU.PcbDoc</div>
<div class=t style="left:102.00px;top:143.00px;color:#ebebeb;letter-spacing:0.250px">Add</div>
<div class=t style="left:312.30px;top:143.00px;color:#ebebeb;letter-spacing:-0.350px;transform:scaleX(0.9043);transform-origin:0 0;width:208.68px;overflow:hidden">VCC3A</div>
<div class=t style="left:505.00px;top:143.00px;color:#ebebeb;letter-spacing:0.500px">To</div>
<div class=t style="left:588.52px;top:143.00px;color:#ebebeb;letter-spacing:-0.350px;transform:scaleX(0.9788);transform-origin:0 0">Kame_FMU.PcbDoc</div>
<div class=t style="left:102.00px;top:161.00px;color:#ebebeb;letter-spacing:0.250px">Add</div>
<div class=t style="left:312.30px;top:161.00px;color:#ebebeb;letter-spacing:-0.350px;transform:scaleX(0.8932);transform-origin:0 0;width:211.27px;overflow:hidden">VCC3</div>
<div class=t style="left:505.00px;top:161.00px;color:#ebebeb;letter-spacing:0.500px">To</div>
<div class=t style="left:588.52px;top:161.00px;color:#ebebeb;letter-spacing:-0.350px;transform:scaleX(0.9788);transform-origin:0 0">Kame_FMU.PcbDoc</div>
<div class=t style="left:102.00px;top:179.00px;color:#ebebeb;letter-spacing:0.250px">Add</div>
<div class=t style="left:312.30px;top:179.00px;color:#ebebeb;letter-spacing:-0.350px;transform:scaleX(0.8706);transform-origin:0 0;width:216.75px;overflow:hidden">VCC5_SENSE_B</div>
<div class=t style="left:505.00px;top:179.00px;color:#ebebeb;letter-spacing:0.500px">To</div>
<div class=t style="left:588.52px;top:179.00px;color:#ebebeb;letter-spacing:-0.350px;transform:scaleX(0.9788);transform-origin:0 0">Kame_FMU.PcbDoc</div>
<div class=t style="left:102.00px;top:197.00px;color:#ebebeb;letter-spacing:0.250px">Add</div>
<div class=t style="left:312.30px;top:197.00px;color:#ebebeb;letter-spacing:-0.350px;transform:scaleX(0.8785);transform-origin:0 0;width:214.79px;overflow:hidden">VCC5_SENSE</div>
<div class=t style="left:505.00px;top:197.00px;color:#ebebeb;letter-spacing:0.500px">To</div>
<div class=t style="left:588.52px;top:197.00px;color:#ebebeb;letter-spacing:-0.350px;transform:scaleX(0.9788);transform-origin:0 0">Kame_FMU.PcbDoc</div>
<div class=t style="left:102.00px;top:215.00px;color:#ebebeb;letter-spacing:0.250px">Add</div>
<div class=t style="left:312.30px;top:215.00px;color:#ebebeb;letter-spacing:-0.350px;transform:scaleX(0.9015);transform-origin:0 0;width:209.32px;overflow:hidden">VCC5</div>
<div class=t style="left:505.00px;top:215.00px;color:#ebebeb;letter-spacing:0.500px">To</div>
<div class=t style="left:588.52px;top:215.00px;color:#ebebeb;letter-spacing:-0.350px;transform:scaleX(0.9788);transform-origin:0 0">Kame_FMU.PcbDoc</div>
<div class=t style="left:102.00px;top:233.00px;color:#ebebeb;letter-spacing:-0.174px">Add Component Classes(7)</div>
<div class=t style="left:102.00px;top:251.00px;color:#ebebeb;letter-spacing:0.250px">Add</div>
<div class=t style="left:312.30px;top:251.00px;color:#ebebeb;letter-spacing:-0.312px;width:188.70px;overflow:hidden">2_mb_conn</div>
<div class=t style="left:505.00px;top:251.00px;color:#ebebeb;letter-spacing:0.500px">To</div>
<div class=t style="left:588.52px;top:251.00px;color:#ebebeb;letter-spacing:-0.350px;transform:scaleX(0.9788);transform-origin:0 0">Kame_FMU.PcbDoc</div>
<div class=t style="left:102.00px;top:269.00px;color:#ebebeb;letter-spacing:0.250px">Add</div>
<div class=t style="left:312.30px;top:269.00px;color:#ebebeb;letter-spacing:-0.100px;width:188.70px;overflow:hidden">3_power</div>
<div class=t style="left:505.00px;top:269.00px;color:#ebebeb;letter-spacing:0.500px">To</div>
<div class=t style="left:588.52px;top:269.00px;color:#ebebeb;letter-spacing:-0.350px;transform:scaleX(0.9788);transform-origin:0 0">Kame_FMU.PcbDoc</div>
<div class=t style="left:102.00px;top:287.00px;color:#ebebeb;letter-spacing:0.250px">Add</div>
<div class=t style="left:312.30px;top:287.00px;color:#ebebeb;letter-spacing:-0.350px;width:188.70px;overflow:hidden">4_cpu</div>
<div class=t style="left:505.00px;top:287.00px;color:#ebebeb;letter-spacing:0.500px">To</div>
<div class=t style="left:588.52px;top:287.00px;color:#ebebeb;letter-spacing:-0.350px;transform:scaleX(0.9788);transform-origin:0 0">Kame_FMU.PcbDoc</div>
<div class=t style="left:102.00px;top:305.00px;color:#ebebeb;letter-spacing:0.250px">Add</div>
<div class=t style="left:312.30px;top:305.00px;color:#ebebeb;letter-spacing:-0.350px;transform:scaleX(0.9841);transform-origin:0 0;width:191.76px;overflow:hidden">5_spi_memory</div>
<div class=t style="left:505.00px;top:305.00px;color:#ebebeb;letter-spacing:0.500px">To</div>
<div class=t style="left:588.52px;top:305.00px;color:#ebebeb;letter-spacing:-0.350px;transform:scaleX(0.9788);transform-origin:0 0">Kame_FMU.PcbDoc</div>
<div class=t style="left:102.00px;top:323.00px;color:#ebebeb;letter-spacing:0.250px">Add</div>
<div class=t style="left:312.30px;top:323.00px;color:#ebebeb;letter-spacing:-0.350px;transform:scaleX(0.9803);transform-origin:0 0;width:192.50px;overflow:hidden">6_uart_esc_i2c</div>
<div class=t style="left:505.00px;top:323.00px;color:#ebebeb;letter-spacing:0.500px">To</div>
<div class=t style="left:588.52px;top:323.00px;color:#ebebeb;letter-spacing:-0.350px;transform:scaleX(0.9788);transform-origin:0 0">Kame_FMU.PcbDoc</div>
<div class=t style="left:102.00px;top:341.00px;color:#ebebeb;letter-spacing:0.250px">Add</div>
<div class=t style="left:312.30px;top:341.00px;color:#ebebeb;letter-spacing:-0.333px;width:188.70px;overflow:hidden">7_can_rc_i2c_analog</div>
<div class=t style="left:505.00px;top:341.00px;color:#ebebeb;letter-spacing:0.500px">To</div>
<div class=t style="left:588.52px;top:341.00px;color:#ebebeb;letter-spacing:-0.350px;transform:scaleX(0.9788);transform-origin:0 0">Kame_FMU.PcbDoc</div>
<div class=t style="left:102.00px;top:359.00px;color:#ebebeb;letter-spacing:0.250px">Add</div>
<div class=t style="left:312.30px;top:359.00px;color:#ebebeb;letter-spacing:0.107px;width:188.70px;overflow:hidden">8_imu&amp;debug_conn</div>
<div class=t style="left:505.00px;top:359.00px;color:#ebebeb;letter-spacing:0.500px">To</div>
<div class=t style="left:588.52px;top:359.00px;color:#ebebeb;letter-spacing:-0.350px;transform:scaleX(0.9788);transform-origin:0 0">Kame_FMU.PcbDoc</div>
<div class=t style="left:102.00px;top:377.00px;color:#ebebeb;letter-spacing:-0.022px">Add Differential Pair(1)</div>
<div class=t style="left:102.00px;top:395.00px;color:#ebebeb;letter-spacing:0.250px">Add</div>
<div class=t style="left:312.59px;top:395.00px;color:#ebebeb;letter-spacing:-0.350px;transform:scaleX(0.9108);transform-origin:0 0;width:206.86px;overflow:hidden">USB</div>
<div class=t style="left:505.00px;top:395.00px;color:#ebebeb;letter-spacing:0.500px">To</div>
<div class=t style="left:588.52px;top:395.00px;color:#ebebeb;letter-spacing:-0.350px;transform:scaleX(0.9788);transform-origin:0 0">Kame_FMU.PcbDoc</div>
<div class=t style="left:102.00px;top:413.00px;color:#ebebeb;letter-spacing:-0.318px">Add Rules(2)</div>
<div class=t style="left:102.00px;top:431.00px;color:#ebebeb;letter-spacing:0.250px">Add</div>
<div class=t style="left:311.30px;top:431.00px;color:#ebebeb;letter-spacing:0.043px;width:189.70px;overflow:hidden">Differential Pairs Routing [Pref Gap =</div>
<div class=t style="left:505.00px;top:431.00px;color:#ebebeb;letter-spacing:0.500px">To</div>
<div class=t style="left:588.52px;top:431.00px;color:#ebebeb;letter-spacing:-0.350px;transform:scaleX(0.9788);transform-origin:0 0">Kame_FMU.PcbDoc</div>
<div class=t style="left:102.00px;top:449.00px;color:#ebebeb;letter-spacing:0.250px">Add</div>
<div class=t style="left:311.30px;top:449.00px;color:#ebebeb;letter-spacing:0.043px;width:189.70px;overflow:hidden">Differential Pairs Routing [Pref Gap =</div>
<div class=t style="left:505.00px;top:449.00px;color:#ebebeb;letter-spacing:0.500px">To</div>
<div class=t style="left:588.52px;top:449.00px;color:#ebebeb;letter-spacing:-0.350px;transform:scaleX(0.9788);transform-origin:0 0">Kame_FMU.PcbDoc</div>
<div class=t style="left:9.40px;top:475.00px;color:#e2705f;letter-spacing:0.172px">Warning: Errors occurred during compilation of the project!</div>
<div class=t style="left:324.50px;top:475.00px;color:#a9c3de;letter-spacing:0.105px">Click here to review them before continuing.</div>
<div class=t style="left:8.40px;top:515.00px;color:#ebebeb;letter-spacing:-0.107px">Validate Changes</div>
<div class=t style="left:120.35px;top:515.00px;color:#8c8c8c;letter-spacing:-0.257px">Execute Changes</div>
<div class=t style="left:230.40px;top:515.00px;color:#ebebeb;letter-spacing:-0.062px">Report Changes...</div>
<div class=t style="left:356.70px;top:515.00px;color:#ebebeb;letter-spacing:-0.133px">Only Show Errors</div>
<div class=t style="left:1050.60px;top:515.00px;color:#ebebeb;letter-spacing:-0.350px;transform:scaleX(0.9891);transform-origin:0 0">Close</div></body></html>
